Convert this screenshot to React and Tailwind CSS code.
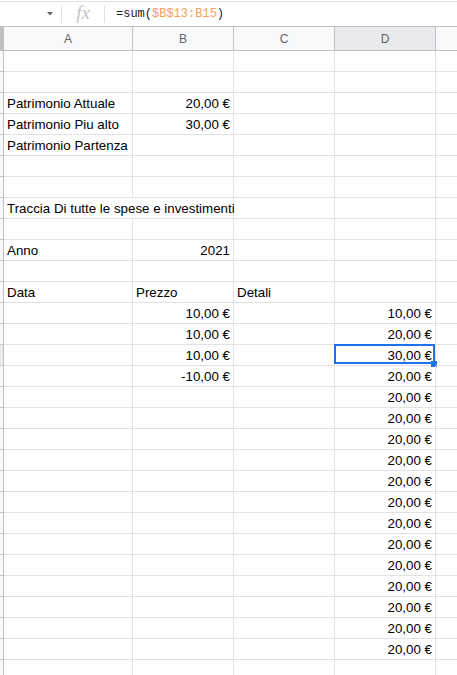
import React from 'react'

const cellFont = { fontFamily: '"Liberation Sans", Arial, sans-serif' }

const rows = [
  {},
  {},
  { a: 'Patrimonio Attuale', b: '20,00 €' },
  { a: 'Patrimonio Piu alto', b: '30,00 €' },
  { a: 'Patrimonio Partenza' },
  {},
  {},
  { a: 'Traccia Di tutte le spese e investimenti', overflow: true },
  {},
  { a: 'Anno', b: '2021' },
  {},
  { a: 'Data', bLeft: 'Prezzo', c: 'Detali' },
  { b: '10,00 €', d: '10,00 €' },
  { b: '10,00 €', d: '20,00 €' },
  { b: '10,00 €', d: '30,00 €', selected: true },
  { b: '-10,00 €', d: '20,00 €' },
  ...Array.from({ length: 13 }, () => ({ d: '20,00 €' })),
  {},
]

function FormulaBar() {
  return (
    <div className="h-[27px] border-b border-[#c0c0c0] flex flex-col">
      <div className="h-[2px] border-b border-[#e3e3e3]" />
      <div className="flex-1 flex items-center">
        <div className="w-[61px] h-full flex items-center justify-end pr-[8px]">
          <svg width="6" height="4" viewBox="0 0 6 4">
            <path d="M0 0 L6 0 L3 3.5 Z" fill="#5f6368" />
          </svg>
        </div>
        <div className="w-px h-[17px] bg-[#e0e0e0]" />
        <div className="w-[42px] flex justify-center">
          <span
            className="italic text-[19px] leading-none text-[#c4c4c4] -mt-[3px]"
            style={{ fontFamily: '"Liberation Serif", "Times New Roman", serif' }}
          >
            fx
          </span>
        </div>
        <div className="w-px h-[17px] bg-[#e0e0e0]" />
        <div
          className="pl-[11px] text-[12px] text-[#222]"
          style={{ fontFamily: '"Liberation Mono", "DejaVu Sans Mono", monospace' }}
        >
          =sum(<span className="text-[#f5a05a]">$B$13:B15</span>)
        </div>
      </div>
    </div>
  )
}

function HeaderRow() {
  const cols = ['A', 'B', 'C', 'D', '']
  return (
    <div className="grid grid-cols-[4px_129px_101px_101px_101px_1fr] h-[24px]">
      <div className="bg-[#c0c0c0] border-b border-[#c0c0c0]" />
      {cols.map((c, i) => (
        <div
          key={i}
          className={`flex items-center justify-center text-[12px] text-[#5f6368] border-b border-[#c0c0c0] ${
            i < 4 ? 'border-r' : ''
          } ${c === 'D' ? 'bg-[#e8eaed]' : 'bg-[#f8f9fa]'}`}
          style={cellFont}
        >
          {c}
        </div>
      ))}
    </div>
  )
}

function Cell({ children, right, noBorderRight, overflow, className = '' }) {
  return (
    <div
      className={`relative h-[21px] border-b border-[#e2e2e2] flex items-end pb-[1px] text-[13.33px] leading-[17px] text-black whitespace-nowrap ${
        noBorderRight ? '' : 'border-r'
      } ${right ? 'justify-end pr-[3px]' : 'pl-[3px]'} ${overflow ? 'overflow-visible z-10' : 'overflow-hidden'} ${className}`}
      style={cellFont}
    >
      {children}
    </div>
  )
}

export default function App() {
  return (
    <div className="w-[457px] h-[675px] overflow-hidden bg-white">
      <FormulaBar />
      <HeaderRow />
      {rows.map((r, i) => (
        <div key={i} className="grid grid-cols-[4px_129px_101px_101px_101px_1fr] border-[#e2e2e2]">
          <div
            className={`h-[21px] border-r border-b border-r-[#c0c0c0] border-b-[#c8c8c8] ${
              r.selected ? 'bg-[#e8eaed]' : 'bg-[#f8f9fa]'
            }`}
          />
          <Cell noBorderRight={r.overflow} overflow={r.overflow}>{r.a}</Cell>
          <Cell right={!r.bLeft}>{r.b || r.bLeft}</Cell>
          <Cell>{r.c}</Cell>
          <Cell right className="overflow-visible">
            {r.d}
            {r.selected && (
              <>
                <div className="absolute -left-[1px] -top-[1px] right-0 bottom-[1px] border-2 border-[#1a73e8]" />
                <div className="absolute -right-[2px] -bottom-[2px] w-[6px] h-[6px] bg-[#1a73e8]" />
              </>
            )}
          </Cell>
          <Cell noBorderRight />
        </div>
      ))}
    </div>
  )
}
